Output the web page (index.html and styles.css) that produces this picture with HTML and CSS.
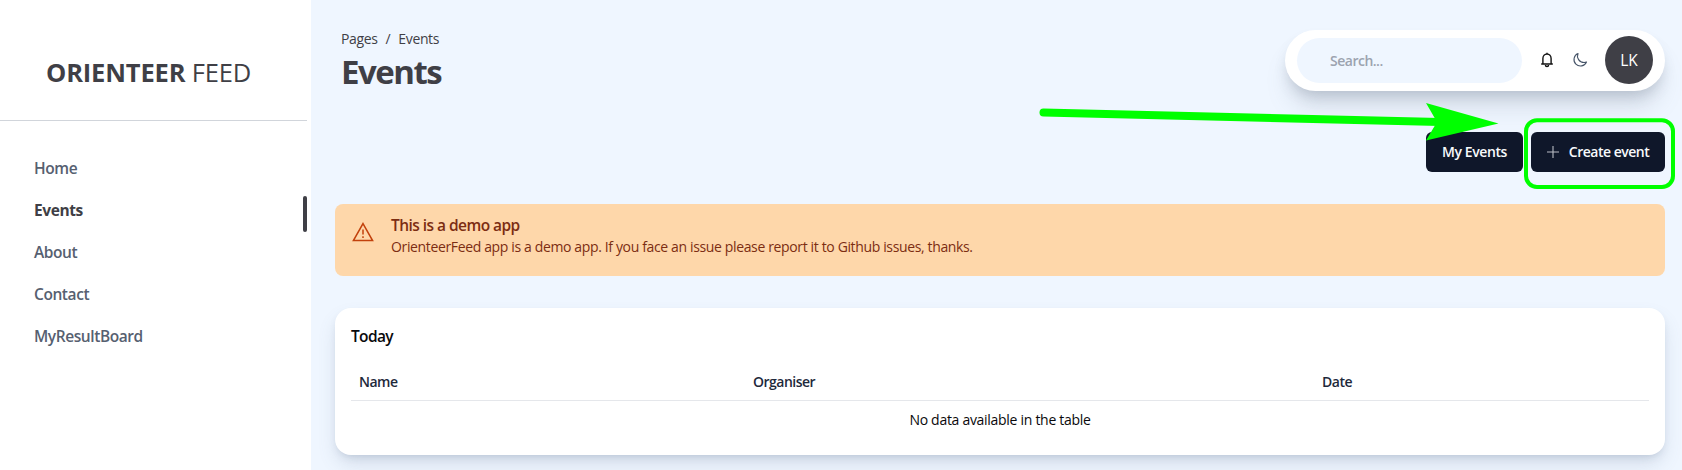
FILE: index.html
```html
<!DOCTYPE html>
<html lang="en">
<head>
<meta charset="utf-8">
<title>Orienteer Feed</title>
<link rel="stylesheet" href="styles.css">
</head>
<body>
<div class="app">
  <aside class="sidebar">
    <div class="brand"><span><b>ORIENTEER</b> FEED</span></div>
    <nav class="nav">
      <a class="nav-item home">Home</a>
      <a class="nav-item active"><span>Events</span></a>
      <a class="nav-item about">About</a>
      <a class="nav-item contact">Contact</a>
      <a class="nav-item board">MyResultBoard</a>
    </nav>
  </aside>
  <main class="main">
    <header class="topbar">
      <div class="heading">
        <div class="crumbs"><span>Pages</span><span>/</span><span>Events</span></div>
        <h1 class="title"><span>Events</span></h1>
      </div>
      <div class="tools">
        <div class="search"><span>Search...</span></div>
        <svg class="icon bell" viewBox="0 0 16 16" width="16" height="16" fill="none" stroke="#111" stroke-width="1.4"><path d="M3.9 12V6.4a4.1 4.4 0 0 1 8.2 0V12M2.2 12h11.6M8 2V.8M6.4 13a1.6 1.5 0 0 0 3.2 0"/></svg>
        <svg class="icon moon" viewBox="0 0 24 24" width="16" height="16" fill="none" stroke="#475569" stroke-width="1.7" stroke-linejoin="round" stroke-linecap="round"><path d="M21.75 15A9.7 9.7 0 0 1 18 15.75 9.75 9.75 0 0 1 9 2.25 9.75 9.75 0 1 0 21.75 15Z"/></svg>
        <div class="avatar"><span>LK</span></div>
      </div>
    </header>
    <div class="actions">
      <button class="btn"><span>My Events</span></button>
      <button class="btn create"><svg width="12" height="12" viewBox="0 0 12 12" stroke="#b9bcc4" stroke-width="1.1"><path d="M6 0v12M0 6h12"/></svg><span>Create event</span></button>
    </div>
    <section class="alert">
      <svg class="warn" width="22" height="20" viewBox="0 0 22 20" fill="none" stroke="#c2410c" stroke-width="1.5"><path d="M11 1.6 20.6 18.6H1.4Z"/><path d="M11 7.4v5.2M11 14.2v1.8"/></svg>
      <div>
        <div class="alert-title"><span>This is a demo app</span></div>
        <div class="alert-text"><span>OrienteerFeed app is a demo app. If you face an issue please report it to Github issues, thanks.</span></div>
      </div>
    </section>
    <section class="card">
      <h2 class="card-title"><span>Today</span></h2>
      <div class="row head"><span>Name</span><span>Organiser</span><span>Date</span></div>
      <div class="empty"><span>No data available in the table</span></div>
    </section>
  </main>
  <svg class="annotation" width="1682" height="470" viewBox="0 0 1682 470">
    <path d="M1043.5 112.4 1440 122" stroke="#0f0" stroke-width="8" stroke-linecap="round"/>
    <path d="M1426 103 1498.5 123.5 1426 140.5 1437 122Z" fill="#0f0"/>
    <rect x="1526" y="120.3" width="147" height="66.7" rx="11" fill="none" stroke="#0f0" stroke-width="4"/>
  </svg>
</div>
</body>
</html>
```
FILE: styles.css
```css
* { box-sizing: border-box; }
body {
  margin: 0;
  font-family: "Open Sans", "Noto Sans", sans-serif;
  font-size: 14px;
  line-height: 20px;
  color: #09090b;
  background: #eff6ff;
}
.app { position: relative; display: flex; height: 470px; overflow: hidden; }
.sidebar { width: 311px; flex: none; background: #fff; padding-right: 4px; }
.brand {
  height: 121px;
  padding: 54px 0 0 46px;
  border-bottom: 1px solid #d1d5db;
  font-size: 25.5px;
  line-height: 36px;
  letter-spacing: -0.16px;
  white-space: nowrap;
  color: #3f3f46;
}
.nav { padding-top: 26px; }
.nav-item {
  display: flex;
  align-items: center;
  height: 42px;
  padding-left: 34px;
  font-size: 15.5px;
  font-weight: 600;
  letter-spacing: -0.42px;
  color: #566070;
}
.active {
  justify-content: space-between;
  font-weight: 700;
  color: #3f3f46;
}
.active::after {
  content: "";
  width: 4px;
  height: 36px;
  margin-top: 8px;
  border-radius: 2px;
  background: #3f3f46;
}
.main { flex: 1; padding: 30px 17px 0 24px; }
.topbar { display: flex; justify-content: space-between; height: 61px; }
.heading { margin-top: -1px; padding-left: 6px; color: #3f3f46; }
.crumbs { display: flex; gap: 8px; letter-spacing: -0.36px; }
.title { margin: 2px 0 0; font-size: 33px; line-height: 42px; font-weight: 700; letter-spacing: -1.5px; }
.tools {
  display: flex;
  align-items: center;
  width: 380px;
  height: 61px;
  padding: 0 12px;
  border-radius: 31px;
  background: #fff;
  box-shadow: 0 20px 25px -5px rgba(112, 128, 144, .22), 0 8px 14px -4px rgba(80, 90, 110, .25);
}
.search {
  width: 225px;
  height: 45px;
  padding: 13px 0 0 33px;
  border-radius: 23px;
  background: #eff6ff;
  color: #9ca3af;
  font-weight: 600;
  letter-spacing: -0.5px;
}
.bell { margin: -1px 0 0 17px; }
.moon { margin: -1px 0 0 17px; }
.avatar {
  display: grid;
  place-items: center;
  width: 48px;
  height: 48px;
  margin: -1px 0 0 17px;
  border-radius: 50%;
  background: #3f3f46;
  color: #fff;
  font-size: 15.5px;
}
.actions { display: flex; justify-content: flex-end; gap: 8px; margin-top: 41px; }
.btn {
  display: flex;
  align-items: center;
  justify-content: center;
  width: 97px;
  height: 40px;
  padding: 0;
  border: 0;
  border-radius: 6px;
  background: #0f172a;
  color: #f8fafc;
  font: 600 14px/20px "Open Sans", sans-serif;
  letter-spacing: -0.4px;
  white-space: nowrap;
}
.create { width: 134px; gap: 10px; letter-spacing: -0.5px; }
.alert {
  display: flex;
  gap: 17px;
  height: 72px;
  margin-top: 32px;
  padding: 10px 17px;
  border-radius: 8px;
  background: #fed7aa;
  color: #7c2d12;
}
.warn { margin-top: 8px; }
.alert-title { font-size: 15.5px; line-height: 23px; font-weight: 600; letter-spacing: -0.55px; }
.alert-text { letter-spacing: -0.36px; }
.card {
  height: 147px;
  margin-top: 32px;
  padding: 16px;
  border-radius: 16px;
  background: #fff;
  box-shadow: 0 10px 20px -3px rgba(80, 100, 130, .2), 0 4px 8px -4px rgba(80, 100, 130, .25);
}
.card-title { margin: 0; font-size: 15.5px; line-height: 24px; font-weight: 600; letter-spacing: -0.65px; }
.row {
  display: grid;
  grid-template-columns: 394px 569px 1fr;
  height: 53px;
  padding: 24px 8px 0;
  border-bottom: 1px solid #e5e7eb;
  font-weight: 600;
  letter-spacing: -0.5px;
  color: #1e293b;
}
.empty { padding-top: 9px; text-align: center; letter-spacing: -0.29px; }
.annotation { position: absolute; inset: 0; pointer-events: none; }
```
